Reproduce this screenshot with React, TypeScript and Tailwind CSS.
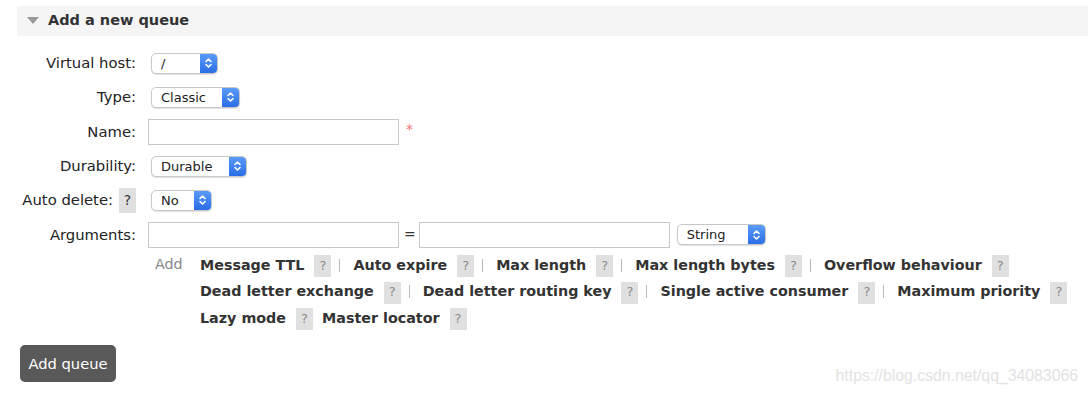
import React from 'react';

const Chevrons = () => (
  <svg width="9" height="12" viewBox="0 0 9 12" fill="none" stroke="white" strokeWidth="1.6" strokeLinecap="round" strokeLinejoin="round">
    <path d="M2 4.5 L4.5 2 L7 4.5" />
    <path d="M2 7.5 L4.5 10 L7 7.5" />
  </svg>
);

const Select = ({ value, width, className = '' }: { value: string; width: number; className?: string }) => (
  <div
    className={`flex h-[21px] items-stretch rounded-[5px] border border-[#c8c8c8] bg-white shadow-[0_1px_1px_rgba(0,0,0,0.12)] overflow-hidden ${className}`}
    style={{ width }}
  >
    <span className="flex-1 pl-[9px] text-[13px] leading-[19px] text-[#222]">{value}</span>
    <span className="flex w-[17px] items-center justify-center bg-gradient-to-b from-[#5a9bf8] to-[#2b6de6]">
      <Chevrons />
    </span>
  </div>
);

const Help = ({ dark = false }: { dark?: boolean }) => (
  <span
    className={`inline-flex w-[17px] items-center justify-center bg-[#e0e0e0] font-normal ${
      dark ? 'h-[25px] text-[14px] text-[#333]' : 'h-[22px] text-[13px] text-[#8a8a8a]'
    }`}
  >
    ?
  </span>
);

const Sep = () => <span className="ml-[8px] mr-[13px] inline-block h-[13px] w-px bg-[#bbb]" />;

const Row = ({ label, help, children }: { label: string; help?: boolean; children: React.ReactNode }) => (
  <div className="flex h-[34.3px] items-center">
    <div className="flex w-[136px] items-center justify-end gap-[6px] text-[14.8px] text-[#222]">
      <span>{label}</span>
      {help && <Help dark />}
    </div>
    <div className="ml-[12px] flex items-center">{children}</div>
  </div>
);

const Arg = ({ name, sep = true }: { name: string; sep?: boolean }) => (
  <span className="inline-flex items-center">
    <span className="font-bold text-[#333]">{name}</span>
    <span className="ml-[10px]"><Help /></span>
    {sep && <Sep />}
  </span>
);

export default function App() {
  return (
    <div className="relative h-[397px] w-[1088px] bg-white pt-[6px] font-['DejaVu_Sans',Verdana,sans-serif]">
      <div className="ml-[17px] flex h-[30px] items-center bg-[#f5f5f5]">
        <svg className="ml-[10px]" width="12" height="8" viewBox="0 0 12 8">
          <path d="M0 0 L12 0 L6 7 Z" fill="#9a9a9a" />
        </svg>
        <span className="ml-[9px] text-[14.5px] font-bold text-[#333]">Add a new queue</span>
      </div>

      <div className="mt-[10px]">
        <Row label="Virtual host:">
          <Select value="/" width={67} className="ml-[3px]" />
        </Row>
        <Row label="Type:">
          <Select value="Classic" width={89} className="ml-[3px]" />
        </Row>
        <Row label="Name:">
          <div className="h-[26px] w-[251px] border border-[#c8c8c8] bg-white" />
          <span className="ml-[7px] mb-[4px] text-[14px] text-[#f07070]">*</span>
        </Row>
        <Row label="Durability:">
          <Select value="Durable" width={96} className="ml-[3px]" />
        </Row>
        <Row label="Auto delete:" help>
          <Select value="No" width={61} className="ml-[3px]" />
        </Row>
        <Row label="Arguments:">
          <div className="h-[26px] w-[251px] border border-[#c8c8c8] bg-white" />
          <span className="ml-[5px] mr-[3px] text-[14px] text-[#333]">=</span>
          <div className="h-[26px] w-[251px] border border-[#c8c8c8] bg-white" />
          <Select value="String" width={89} className="ml-[7px]" />
        </Row>
      </div>

      <div className="flex pl-[155px] text-[14.3px]">
        <span className="w-[45px] text-[#888] leading-[24px]">Add</span>
        <div className="flex flex-col leading-[26.5px]">
          <div className="flex items-center">
            <Arg name="Message TTL" />
            <Arg name="Auto expire" />
            <Arg name="Max length" />
            <Arg name="Max length bytes" />
            <Arg name="Overflow behaviour" sep={false} />
          </div>
          <div className="flex items-center">
            <Arg name="Dead letter exchange" />
            <Arg name="Dead letter routing key" />
            <Arg name="Single active consumer" />
            <Arg name="Maximum priority" sep={false} />
          </div>
          <div className="flex items-center">
            <Arg name="Lazy mode" sep={false} />
            <span className="ml-[9px]"><Arg name="Master locator" sep={false} /></span>
          </div>
        </div>
      </div>

      <button className="ml-[20px] mt-[14px] h-[37px] w-[96px] rounded-[5px] bg-[#595959] text-[14.7px] text-white">
        Add queue
      </button>

      <span className="absolute right-[10px] bottom-[9px] font-['Liberation_Sans',Arial,sans-serif] text-[15.8px] text-[#e2e2e2]">
        https://blog.csdn.net/qq_34083066
      </span>
    </div>
  );
}
